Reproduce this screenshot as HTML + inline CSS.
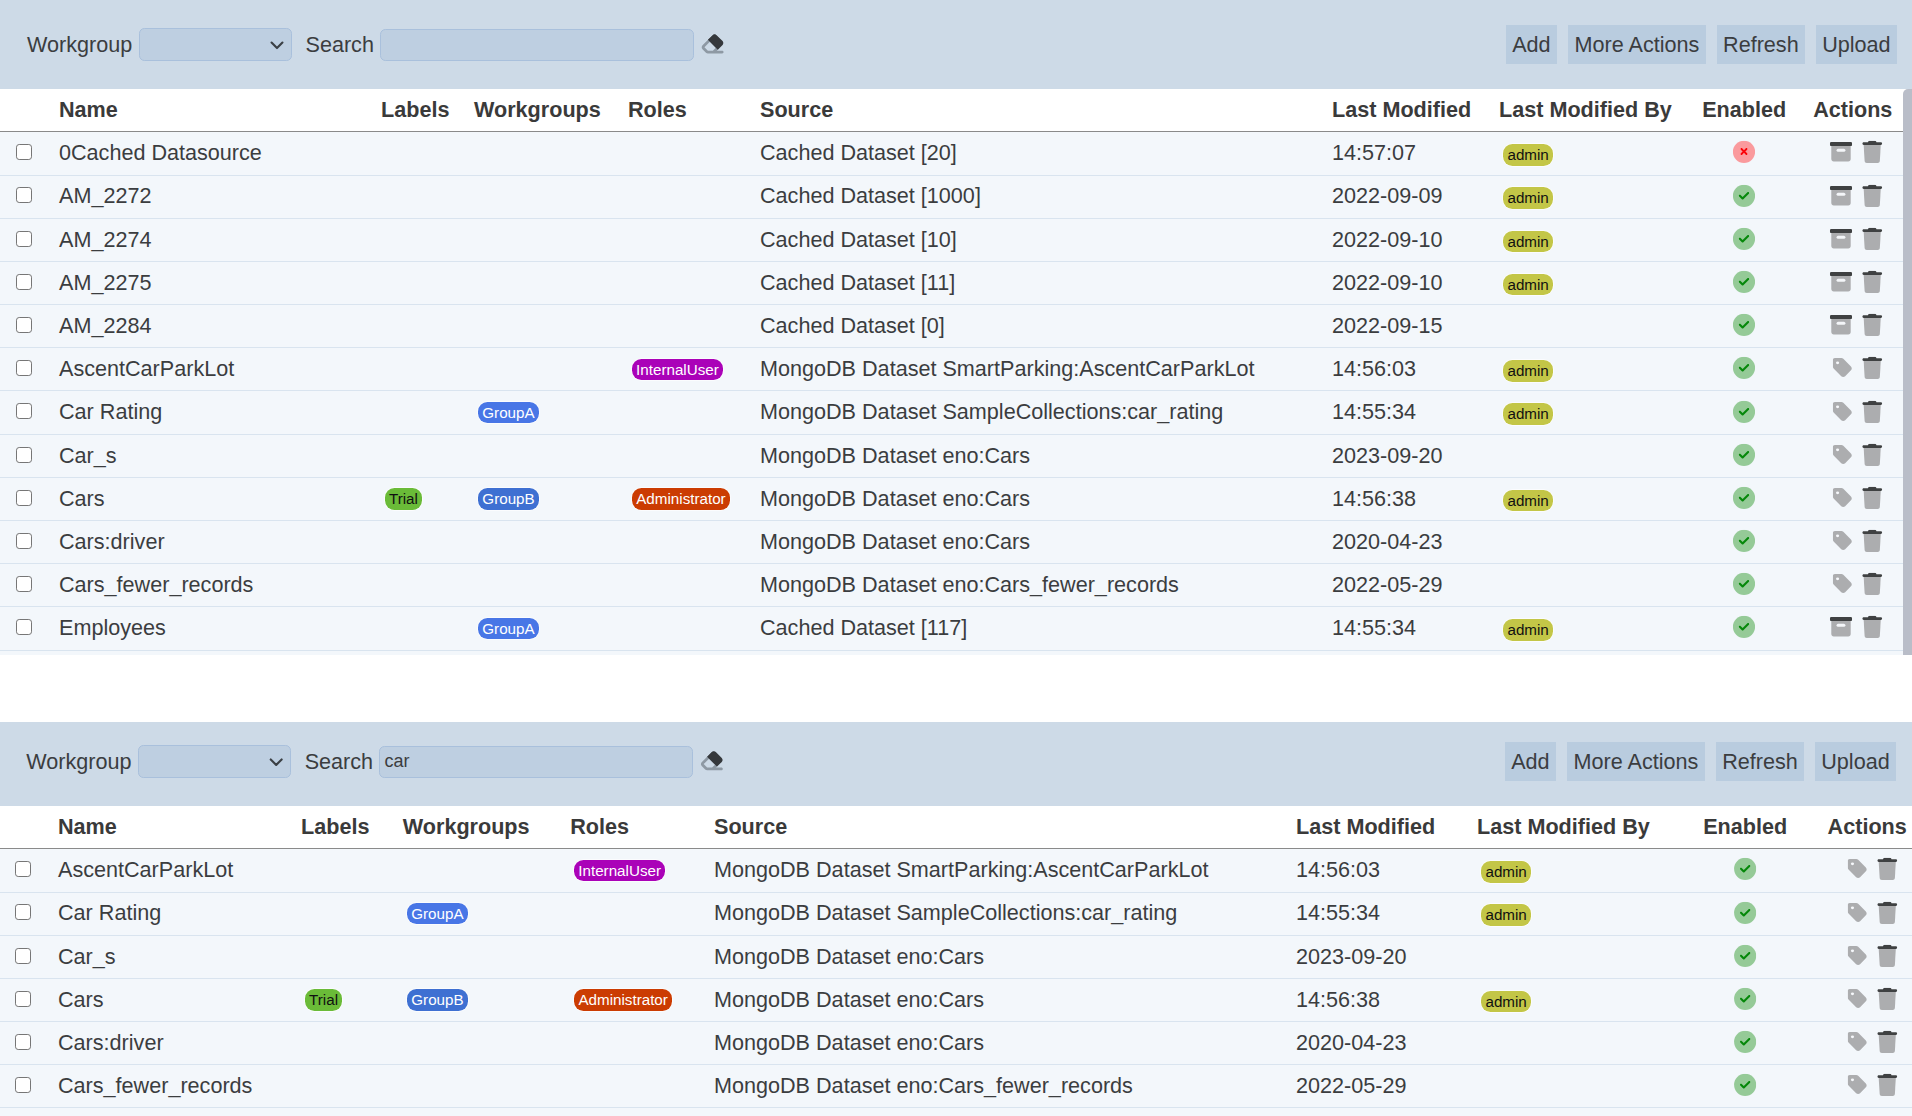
<!DOCTYPE html><html><head><meta charset="utf-8"><title>Datasources</title><style>
html,body{margin:0;padding:0;}
body{width:1912px;height:1116px;overflow:hidden;position:relative;background:#fff;
 font-family:"Liberation Sans",sans-serif;font-size:21.6px;color:#3b3d3f;}
.a,.t,.h,.btn,.sel,.lbl,.cb,.bdg,.ico,.sep{position:absolute;box-sizing:border-box;}
.t,.h{white-space:nowrap;line-height:24px;height:24px;}
.h{font-weight:bold;color:#3a3a3a;}
.btn{background:#b9ccdf;line-height:39px;height:39px;text-align:center;white-space:nowrap;}
.sel{background:#becfe1;border:1.35px solid #a9c0dc;border-radius:5.4px;height:32.5px;}
.lbl{white-space:nowrap;line-height:24px;height:24px;}
.cb{width:16.5px;height:16.3px;border:1.45px solid #767676;border-radius:3.2px;background:#fff;}
.bdg{font-size:15.2px;border-radius:9.45px;padding:0;text-align:center;white-space:nowrap;overflow:hidden;color:#fff;box-shadow:0 0 0 0.75px rgba(255,255,255,.85);}
.ico{display:block;overflow:visible;}
.sep{left:0;height:1px;background:#d9e4ef;}
</style></head><body>
<svg width="0" height="0" style="position:absolute">
<defs>
<symbol id="i-arch" viewBox="0 0 512 512">
 <path fill="#acadaf" d="M32 124H480V424c0 31-25 56-56 56H88c-31 0-56-25-56-56V124z"/>
 <rect x="154" y="189" width="204" height="70" rx="35" fill="#f4f6f9"/>
 <path fill="#3f4142" d="M32 32H480c17.700 0 32 14.300 32 32V94c0 17.700-14.300 32-32 32H32C14.300 126 0 111.700 0 94V64C0 46.300 14.300 32 32 32z"/>
</symbol>
<symbol id="i-trash" viewBox="0 0 448 512" preserveAspectRatio="none">
 <path fill="#acadaf" d="M416 96H32L53.200 467c1.600 25.300 22.600 45 47.900 45H346.900c25.300 0 46.300-19.700 47.900-45L416 96z"/>
 <path fill="#3f4142" d="M135.200 17.700L128 32H32C14.300 32 0 46.300 0 64S14.300 96 32 96H416c17.700 0 32-14.300 32-32s-14.300-32-32-32H320l-7.200-14.300C307.400 6.800 296.300 0 284.200 0H163.800c-12.100 0-23.200 6.800-28.600 17.700z"/>
</symbol>
<symbol id="i-tag" viewBox="0 0 448 512">
 <path fill="#acadaf" d="M0 80V229.500c0 17 6.700 33.300 18.700 45.300l176 176c25 25 65.500 25 90.500 0L418.700 317.300c25-25 25-65.500 0-90.500l-176-176c-12-12-28.300-18.700-45.300-18.700H48C21.500 32 0 53.500 0 80z"/>
 <ellipse cx="110" cy="144" rx="36" ry="33" fill="#f6f8fb"/>
</symbol>
<symbol id="i-ok" viewBox="0 0 512 512">
 <circle cx="256" cy="256" r="256" fill="#95ca97"/>
 <path fill="#06880a" d="M369 209L241 337c-9.400 9.400-24.600 9.400-33.900 0l-64-64c-9.400-9.400-9.400-24.600 0-33.900s24.600-9.400 33.900 0l47 47L335 175c9.400-9.400 24.600-9.400 33.900 0s9.400 24.600 0 33.900z"/>
</symbol>
<symbol id="i-no" viewBox="0 0 512 512">
 <circle cx="256" cy="256" r="256" fill="#fa9a9d"/>
 <path fill="#fb0207" transform="translate(256 249) scale(.9) translate(-256 -256)" d="M175 175c9.400-9.400 24.600-9.400 33.900 0l47 47 47-47c9.400-9.400 24.600-9.400 33.900 0s9.400 24.600 0 33.900l-47 47 47 47c9.400 9.400 9.400 24.600 0 33.900s-24.600 9.400-33.900 0l-47-47-47 47c-9.400 9.400-24.600 9.400-33.900 0s-9.400-24.600 0-33.900l47-47-47-47c-9.400-9.400-9.400-24.600 0-33.900z"/>
</symbol>
<symbol id="i-eraser" viewBox="0 0 576 512">
 <path fill="#8e99a4" d="M290.700 57.400L57.400 290.700c-25 25-25 65.500 0 90.500l80 80c12 12 28.300 18.700 45.300 18.700H288h9.400H512c17.700 0 32-14.300 32-32s-14.300-32-32-32H387.900L518.600 285.300c25-25 25-65.500 0-90.500L381.300 57.400c-25-25-65.500-25-90.500 0zM297.400 416H288l-105.400 0-80-80L227.300 211.300 364.700 348.700 297.400 416z"/>
 <path fill="#35383c" d="M182 166L290.700 57.400c25-25 65.500-25 90.500 0L518.600 194.800c25 25 25 65.500 0 90.500L410 394z"/>
</symbol>
<symbol id="i-chev" viewBox="0 0 16 16">
 <path fill="none" stroke="#3b4045" stroke-width="2.1" stroke-linecap="round" stroke-linejoin="round" d="M2.600 5.300l5.400 5.400 5.400-5.400"/>
</symbol>
</defs>
</svg>
<div class="a" style="left:0;top:0px;width:1912px;height:88.5px;background:#cddae7"></div>
<span class="lbl" style="left:27px;top:32.71px">Workgroup</span>
<div class="sel" style="left:139.2px;top:28.3px;width:152.8px"></div>
<svg class="ico" style="left:268px;top:37px;transform:translate(0.90px,0.20px)" width="16.2" height="16.2"><use href="#i-chev"/></svg>
<span class="lbl" style="left:305.5px;top:32.71px">Search</span>
<div class="sel" style="left:380px;top:29.150000000000002px;width:314px;height:31.65px"></div>
<svg class="ico" style="left:700px;top:32px;transform:translate(0.00px,0.65px)" width="24.98" height="22.2"><use href="#i-eraser"/></svg>
<div class="btn" style="left:1505.8px;top:25px;width:51.2px">Add</div>
<div class="btn" style="left:1567.9px;top:25px;width:138.0px">More Actions</div>
<div class="btn" style="left:1716.6px;top:25px;width:88.5px">Refresh</div>
<div class="btn" style="left:1815.8px;top:25px;width:81.2px">Upload</div>
<div class="a" style="left:0;top:88.5px;width:1903px;height:42.5px;background:#fff"></div>
<div class="a" style="left:0;top:131px;width:1903px;height:1px;background:#8a8a8a"></div>
<span class="h" style="left:59px;top:97.51px">Name</span>
<span class="h" style="left:381px;top:97.51px">Labels</span>
<span class="h" style="left:474px;top:97.51px">Workgroups</span>
<span class="h" style="left:628px;top:97.51px">Roles</span>
<span class="h" style="left:760px;top:97.51px">Source</span>
<span class="h" style="left:1332px;top:97.51px">Last Modified</span>
<span class="h" style="left:1499px;top:97.51px">Last Modified By</span>
<span class="h" style="left:1702.2px;top:97.51px">Enabled</span>
<span class="h" style="left:1813.2px;top:97.51px">Actions</span>
<div class="a" style="left:0;top:132px;width:1903px;height:523px;background:#f3f7fb"></div>
<div class="sep" style="top:175px;width:1903px"></div>
<div class="sep" style="top:218px;width:1903px"></div>
<div class="sep" style="top:261px;width:1903px"></div>
<div class="sep" style="top:304px;width:1903px"></div>
<div class="sep" style="top:347px;width:1903px"></div>
<div class="sep" style="top:390px;width:1903px"></div>
<div class="sep" style="top:434px;width:1903px"></div>
<div class="sep" style="top:477px;width:1903px"></div>
<div class="sep" style="top:520px;width:1903px"></div>
<div class="sep" style="top:563px;width:1903px"></div>
<div class="sep" style="top:606px;width:1903px"></div>
<div class="sep" style="top:650px;width:1903px"></div>
<span class="cb" style="left:15.6px;top:144px"></span>
<span class="t" style="left:59px;top:140.81px">0Cached Datasource</span>
<span class="t" style="left:760px;top:140.81px">Cached Dataset [20]</span>
<span class="t" style="left:1332px;top:140.81px">14:57:07</span>
<span class="bdg" style="left:1503px;top:143.85px;width:50.3px;height:22.30px;line-height:22.36px;background:#c3c647;color:#111;">admin</span>
<svg class="ico" style="left:1732px;top:140px;transform:translate(0.90px,0.70px)" width="22.2" height="22.2"><use href="#i-no"/></svg>
<svg class="ico" style="left:1829px;top:140px;transform:translate(0.90px,0.65px)" width="22.2" height="22.2"><use href="#i-arch"/></svg>
<svg class="ico" style="left:1862px;top:140px;transform:translate(0.25px,0.80px)" width="19.95" height="22.2"><use href="#i-trash"/></svg>
<span class="cb" style="left:15.6px;top:187px"></span>
<span class="t" style="left:59px;top:183.81px">AM_2272</span>
<span class="t" style="left:760px;top:183.81px">Cached Dataset [1000]</span>
<span class="t" style="left:1332px;top:183.81px">2022-09-09</span>
<span class="bdg" style="left:1503px;top:186.85px;width:50.3px;height:22.30px;line-height:22.36px;background:#c3c647;color:#111;">admin</span>
<svg class="ico" style="left:1732px;top:184px;transform:translate(0.90px,0.70px)" width="22.2" height="22.2"><use href="#i-ok"/></svg>
<svg class="ico" style="left:1829px;top:184px;transform:translate(0.90px,0.65px)" width="22.2" height="22.2"><use href="#i-arch"/></svg>
<svg class="ico" style="left:1862px;top:184px;transform:translate(0.25px,0.80px)" width="19.95" height="22.2"><use href="#i-trash"/></svg>
<span class="cb" style="left:15.6px;top:231px"></span>
<span class="t" style="left:59px;top:227.81px">AM_2274</span>
<span class="t" style="left:760px;top:227.81px">Cached Dataset [10]</span>
<span class="t" style="left:1332px;top:227.81px">2022-09-10</span>
<span class="bdg" style="left:1503px;top:230.85px;width:50.3px;height:21.30px;line-height:22.36px;background:#c3c647;color:#111;">admin</span>
<svg class="ico" style="left:1732px;top:227px;transform:translate(0.90px,0.70px)" width="22.2" height="22.2"><use href="#i-ok"/></svg>
<svg class="ico" style="left:1829px;top:227px;transform:translate(0.90px,0.65px)" width="22.2" height="22.2"><use href="#i-arch"/></svg>
<svg class="ico" style="left:1862px;top:227px;transform:translate(0.25px,0.80px)" width="19.95" height="22.2"><use href="#i-trash"/></svg>
<span class="cb" style="left:15.6px;top:274px"></span>
<span class="t" style="left:59px;top:270.81px">AM_2275</span>
<span class="t" style="left:760px;top:270.81px">Cached Dataset [11]</span>
<span class="t" style="left:1332px;top:270.81px">2022-09-10</span>
<span class="bdg" style="left:1503px;top:273.85px;width:50.3px;height:21.30px;line-height:22.36px;background:#c3c647;color:#111;">admin</span>
<svg class="ico" style="left:1732px;top:270px;transform:translate(0.90px,0.70px)" width="22.2" height="22.2"><use href="#i-ok"/></svg>
<svg class="ico" style="left:1829px;top:270px;transform:translate(0.90px,0.65px)" width="22.2" height="22.2"><use href="#i-arch"/></svg>
<svg class="ico" style="left:1862px;top:270px;transform:translate(0.25px,0.80px)" width="19.95" height="22.2"><use href="#i-trash"/></svg>
<span class="cb" style="left:15.6px;top:317px"></span>
<span class="t" style="left:59px;top:313.81px">AM_2284</span>
<span class="t" style="left:760px;top:313.81px">Cached Dataset [0]</span>
<span class="t" style="left:1332px;top:313.81px">2022-09-15</span>
<svg class="ico" style="left:1732px;top:313px;transform:translate(0.90px,0.70px)" width="22.2" height="22.2"><use href="#i-ok"/></svg>
<svg class="ico" style="left:1829px;top:313px;transform:translate(0.90px,0.65px)" width="22.2" height="22.2"><use href="#i-arch"/></svg>
<svg class="ico" style="left:1862px;top:313px;transform:translate(0.25px,0.80px)" width="19.95" height="22.2"><use href="#i-trash"/></svg>
<span class="cb" style="left:15.6px;top:360px"></span>
<span class="t" style="left:59px;top:356.81px">AscentCarParkLot</span>
<span class="t" style="left:760px;top:356.81px">MongoDB Dataset SmartParking:AscentCarParkLot</span>
<span class="t" style="left:1332px;top:356.81px">14:56:03</span>
<span class="bdg" style="left:631.8px;top:358.85px;width:91.3px;height:21.30px;line-height:22.36px;background:#aa02b8;color:#fff;">InternalUser</span>
<span class="bdg" style="left:1503px;top:359.85px;width:50.3px;height:22.30px;line-height:22.36px;background:#c3c647;color:#111;">admin</span>
<svg class="ico" style="left:1732px;top:356px;transform:translate(0.90px,0.70px)" width="22.2" height="22.2"><use href="#i-ok"/></svg>
<svg class="ico" style="left:1832px;top:356px;transform:translate(0.80px,0.60px)" width="19.43" height="22.2"><use href="#i-tag"/></svg>
<svg class="ico" style="left:1862px;top:356px;transform:translate(0.25px,0.80px)" width="19.95" height="22.2"><use href="#i-trash"/></svg>
<span class="cb" style="left:15.6px;top:403px"></span>
<span class="t" style="left:59px;top:399.81px">Car Rating</span>
<span class="t" style="left:760px;top:399.81px">MongoDB Dataset SampleCollections:car_rating</span>
<span class="t" style="left:1332px;top:399.81px">14:55:34</span>
<span class="bdg" style="left:478.1px;top:401.85px;width:60.7px;height:21.30px;line-height:22.36px;background:#4876e6;color:#fff;">GroupA</span>
<span class="bdg" style="left:1503px;top:402.85px;width:50.3px;height:22.30px;line-height:22.36px;background:#c3c647;color:#111;">admin</span>
<svg class="ico" style="left:1732px;top:400px;transform:translate(0.90px,0.70px)" width="22.2" height="22.2"><use href="#i-ok"/></svg>
<svg class="ico" style="left:1832px;top:400px;transform:translate(0.80px,0.60px)" width="19.43" height="22.2"><use href="#i-tag"/></svg>
<svg class="ico" style="left:1862px;top:400px;transform:translate(0.25px,0.80px)" width="19.95" height="22.2"><use href="#i-trash"/></svg>
<span class="cb" style="left:15.6px;top:447px"></span>
<span class="t" style="left:59px;top:443.81px">Car_s</span>
<span class="t" style="left:760px;top:443.81px">MongoDB Dataset eno:Cars</span>
<span class="t" style="left:1332px;top:443.81px">2023-09-20</span>
<svg class="ico" style="left:1732px;top:443px;transform:translate(0.90px,0.70px)" width="22.2" height="22.2"><use href="#i-ok"/></svg>
<svg class="ico" style="left:1832px;top:443px;transform:translate(0.80px,0.60px)" width="19.43" height="22.2"><use href="#i-tag"/></svg>
<svg class="ico" style="left:1862px;top:443px;transform:translate(0.25px,0.80px)" width="19.95" height="22.2"><use href="#i-trash"/></svg>
<span class="cb" style="left:15.6px;top:490px"></span>
<span class="t" style="left:59px;top:486.81px">Cars</span>
<span class="t" style="left:760px;top:486.81px">MongoDB Dataset eno:Cars</span>
<span class="t" style="left:1332px;top:486.81px">14:56:38</span>
<span class="bdg" style="left:384.9px;top:487.85px;width:37.1px;height:22.30px;line-height:22.36px;background:#6abb38;color:#111;">Trial</span>
<span class="bdg" style="left:478.1px;top:487.85px;width:60.9px;height:22.30px;line-height:22.36px;background:#3e70d2;color:#fff;">GroupB</span>
<span class="bdg" style="left:631.8px;top:487.85px;width:98.3px;height:22.30px;line-height:22.36px;background:#cb3c02;color:#fff;">Administrator</span>
<span class="bdg" style="left:1503px;top:489.85px;width:50.3px;height:21.30px;line-height:22.36px;background:#c3c647;color:#111;">admin</span>
<svg class="ico" style="left:1732px;top:486px;transform:translate(0.90px,0.70px)" width="22.2" height="22.2"><use href="#i-ok"/></svg>
<svg class="ico" style="left:1832px;top:486px;transform:translate(0.80px,0.60px)" width="19.43" height="22.2"><use href="#i-tag"/></svg>
<svg class="ico" style="left:1862px;top:486px;transform:translate(0.25px,0.80px)" width="19.95" height="22.2"><use href="#i-trash"/></svg>
<span class="cb" style="left:15.6px;top:533px"></span>
<span class="t" style="left:59px;top:529.81px">Cars:driver</span>
<span class="t" style="left:760px;top:529.81px">MongoDB Dataset eno:Cars</span>
<span class="t" style="left:1332px;top:529.81px">2020-04-23</span>
<svg class="ico" style="left:1732px;top:529px;transform:translate(0.90px,0.70px)" width="22.2" height="22.2"><use href="#i-ok"/></svg>
<svg class="ico" style="left:1832px;top:529px;transform:translate(0.80px,0.60px)" width="19.43" height="22.2"><use href="#i-tag"/></svg>
<svg class="ico" style="left:1862px;top:529px;transform:translate(0.25px,0.80px)" width="19.95" height="22.2"><use href="#i-trash"/></svg>
<span class="cb" style="left:15.6px;top:576px"></span>
<span class="t" style="left:59px;top:572.81px">Cars_fewer_records</span>
<span class="t" style="left:760px;top:572.81px">MongoDB Dataset eno:Cars_fewer_records</span>
<span class="t" style="left:1332px;top:572.81px">2022-05-29</span>
<svg class="ico" style="left:1732px;top:572px;transform:translate(0.90px,0.70px)" width="22.2" height="22.2"><use href="#i-ok"/></svg>
<svg class="ico" style="left:1832px;top:572px;transform:translate(0.80px,0.60px)" width="19.43" height="22.2"><use href="#i-tag"/></svg>
<svg class="ico" style="left:1862px;top:572px;transform:translate(0.25px,0.80px)" width="19.95" height="22.2"><use href="#i-trash"/></svg>
<span class="cb" style="left:15.6px;top:619px"></span>
<span class="t" style="left:59px;top:615.81px">Employees</span>
<span class="t" style="left:760px;top:615.81px">Cached Dataset [117]</span>
<span class="t" style="left:1332px;top:615.81px">14:55:34</span>
<span class="bdg" style="left:478.1px;top:617.85px;width:60.7px;height:21.30px;line-height:22.36px;background:#4876e6;color:#fff;">GroupA</span>
<span class="bdg" style="left:1503px;top:618.85px;width:50.3px;height:22.30px;line-height:22.36px;background:#c3c647;color:#111;">admin</span>
<svg class="ico" style="left:1732px;top:615px;transform:translate(0.90px,0.70px)" width="22.2" height="22.2"><use href="#i-ok"/></svg>
<svg class="ico" style="left:1829px;top:615px;transform:translate(0.90px,0.65px)" width="22.2" height="22.2"><use href="#i-arch"/></svg>
<svg class="ico" style="left:1862px;top:615px;transform:translate(0.25px,0.80px)" width="19.95" height="22.2"><use href="#i-trash"/></svg>
<div class="a" style="left:1903px;top:88.5px;width:9px;height:566.5px;background:#b9bdc8;border-radius:5px 0 0 0"></div>
<div class="a" style="left:0;top:655px;width:1912px;height:67px;background:#fff"></div>
<div class="a" style="left:0;top:722px;width:1912px;height:84px;background:#cddae7"></div>
<span class="lbl" style="left:26.2px;top:749.61px">Workgroup</span>
<div class="sel" style="left:138.39999999999998px;top:745.2px;width:152.8px"></div>
<svg class="ico" style="left:268px;top:754px;transform:translate(0.10px,0.10px)" width="16.2" height="16.2"><use href="#i-chev"/></svg>
<span class="lbl" style="left:304.7px;top:749.61px">Search</span>
<div class="sel" style="left:379.2px;top:746.0500000000001px;width:314px;height:31.65px"></div>
<span class="a" style="left:384.59999999999997px;top:750.7px;font-size:18px;line-height:21px;white-space:nowrap">car</span>
<svg class="ico" style="left:699px;top:749px;transform:translate(0.20px,0.55px)" width="24.98" height="22.2"><use href="#i-eraser"/></svg>
<div class="btn" style="left:1504.9px;top:742px;width:51.0px">Add</div>
<div class="btn" style="left:1567px;top:742px;width:138.0px">More Actions</div>
<div class="btn" style="left:1716px;top:742px;width:88.0px">Refresh</div>
<div class="btn" style="left:1814.8px;top:742px;width:81.4px">Upload</div>
<div class="a" style="left:0;top:806px;width:1912px;height:42px;background:#fff"></div>
<div class="a" style="left:0;top:848px;width:1912px;height:1px;background:#8a8a8a"></div>
<span class="h" style="left:58px;top:814.51px">Name</span>
<span class="h" style="left:301px;top:814.51px">Labels</span>
<span class="h" style="left:402.8px;top:814.51px">Workgroups</span>
<span class="h" style="left:570.2px;top:814.51px">Roles</span>
<span class="h" style="left:714px;top:814.51px">Source</span>
<span class="h" style="left:1296px;top:814.51px">Last Modified</span>
<span class="h" style="left:1477px;top:814.51px">Last Modified By</span>
<span class="h" style="left:1703.2px;top:814.51px">Enabled</span>
<span class="h" style="left:1827.6px;top:814.51px">Actions</span>
<div class="a" style="left:0;top:849px;width:1912px;height:267px;background:#f3f7fb"></div>
<div class="sep" style="top:892px;width:1912px"></div>
<div class="sep" style="top:935px;width:1912px"></div>
<div class="sep" style="top:978px;width:1912px"></div>
<div class="sep" style="top:1021px;width:1912px"></div>
<div class="sep" style="top:1064px;width:1912px"></div>
<div class="sep" style="top:1107px;width:1912px"></div>
<span class="cb" style="left:14.6px;top:861px"></span>
<span class="t" style="left:58px;top:857.81px">AscentCarParkLot</span>
<span class="t" style="left:714px;top:857.81px">MongoDB Dataset SmartParking:AscentCarParkLot</span>
<span class="t" style="left:1296px;top:857.81px">14:56:03</span>
<span class="bdg" style="left:574px;top:859.85px;width:91.3px;height:21.30px;line-height:22.36px;background:#aa02b8;color:#fff;">InternalUser</span>
<span class="bdg" style="left:1481px;top:860.85px;width:50.3px;height:22.30px;line-height:22.36px;background:#c3c647;color:#111;">admin</span>
<svg class="ico" style="left:1734px;top:857px;transform:translate(0.05px,0.70px)" width="22.2" height="22.2"><use href="#i-ok"/></svg>
<svg class="ico" style="left:1847px;top:857px;transform:translate(0.70px,0.60px)" width="19.43" height="22.2"><use href="#i-tag"/></svg>
<svg class="ico" style="left:1877px;top:857px;transform:translate(0.30px,0.80px)" width="19.95" height="22.2"><use href="#i-trash"/></svg>
<span class="cb" style="left:14.6px;top:904px"></span>
<span class="t" style="left:58px;top:900.81px">Car Rating</span>
<span class="t" style="left:714px;top:900.81px">MongoDB Dataset SampleCollections:car_rating</span>
<span class="t" style="left:1296px;top:900.81px">14:55:34</span>
<span class="bdg" style="left:407px;top:902.85px;width:60.7px;height:21.30px;line-height:22.36px;background:#4876e6;color:#fff;">GroupA</span>
<span class="bdg" style="left:1481px;top:903.85px;width:50.3px;height:22.30px;line-height:22.36px;background:#c3c647;color:#111;">admin</span>
<svg class="ico" style="left:1734px;top:901px;transform:translate(0.05px,0.70px)" width="22.2" height="22.2"><use href="#i-ok"/></svg>
<svg class="ico" style="left:1847px;top:901px;transform:translate(0.70px,0.60px)" width="19.43" height="22.2"><use href="#i-tag"/></svg>
<svg class="ico" style="left:1877px;top:901px;transform:translate(0.30px,0.80px)" width="19.95" height="22.2"><use href="#i-trash"/></svg>
<span class="cb" style="left:14.6px;top:948px"></span>
<span class="t" style="left:58px;top:944.81px">Car_s</span>
<span class="t" style="left:714px;top:944.81px">MongoDB Dataset eno:Cars</span>
<span class="t" style="left:1296px;top:944.81px">2023-09-20</span>
<svg class="ico" style="left:1734px;top:944px;transform:translate(0.05px,0.70px)" width="22.2" height="22.2"><use href="#i-ok"/></svg>
<svg class="ico" style="left:1847px;top:944px;transform:translate(0.70px,0.60px)" width="19.43" height="22.2"><use href="#i-tag"/></svg>
<svg class="ico" style="left:1877px;top:944px;transform:translate(0.30px,0.80px)" width="19.95" height="22.2"><use href="#i-trash"/></svg>
<span class="cb" style="left:14.6px;top:991px"></span>
<span class="t" style="left:58px;top:987.81px">Cars</span>
<span class="t" style="left:714px;top:987.81px">MongoDB Dataset eno:Cars</span>
<span class="t" style="left:1296px;top:987.81px">14:56:38</span>
<span class="bdg" style="left:305px;top:988.85px;width:37.1px;height:22.30px;line-height:22.36px;background:#6abb38;color:#111;">Trial</span>
<span class="bdg" style="left:407px;top:988.85px;width:60.9px;height:22.30px;line-height:22.36px;background:#3e70d2;color:#fff;">GroupB</span>
<span class="bdg" style="left:574px;top:988.85px;width:98.3px;height:22.30px;line-height:22.36px;background:#cb3c02;color:#fff;">Administrator</span>
<span class="bdg" style="left:1481px;top:990.85px;width:50.3px;height:21.30px;line-height:22.36px;background:#c3c647;color:#111;">admin</span>
<svg class="ico" style="left:1734px;top:987px;transform:translate(0.05px,0.70px)" width="22.2" height="22.2"><use href="#i-ok"/></svg>
<svg class="ico" style="left:1847px;top:987px;transform:translate(0.70px,0.60px)" width="19.43" height="22.2"><use href="#i-tag"/></svg>
<svg class="ico" style="left:1877px;top:987px;transform:translate(0.30px,0.80px)" width="19.95" height="22.2"><use href="#i-trash"/></svg>
<span class="cb" style="left:14.6px;top:1034px"></span>
<span class="t" style="left:58px;top:1030.81px">Cars:driver</span>
<span class="t" style="left:714px;top:1030.81px">MongoDB Dataset eno:Cars</span>
<span class="t" style="left:1296px;top:1030.81px">2020-04-23</span>
<svg class="ico" style="left:1734px;top:1030px;transform:translate(0.05px,0.70px)" width="22.2" height="22.2"><use href="#i-ok"/></svg>
<svg class="ico" style="left:1847px;top:1030px;transform:translate(0.70px,0.60px)" width="19.43" height="22.2"><use href="#i-tag"/></svg>
<svg class="ico" style="left:1877px;top:1030px;transform:translate(0.30px,0.80px)" width="19.95" height="22.2"><use href="#i-trash"/></svg>
<span class="cb" style="left:14.6px;top:1077px"></span>
<span class="t" style="left:58px;top:1073.81px">Cars_fewer_records</span>
<span class="t" style="left:714px;top:1073.81px">MongoDB Dataset eno:Cars_fewer_records</span>
<span class="t" style="left:1296px;top:1073.81px">2022-05-29</span>
<svg class="ico" style="left:1734px;top:1073px;transform:translate(0.05px,0.70px)" width="22.2" height="22.2"><use href="#i-ok"/></svg>
<svg class="ico" style="left:1847px;top:1073px;transform:translate(0.70px,0.60px)" width="19.43" height="22.2"><use href="#i-tag"/></svg>
<svg class="ico" style="left:1877px;top:1073px;transform:translate(0.30px,0.80px)" width="19.95" height="22.2"><use href="#i-trash"/></svg></body></html>
